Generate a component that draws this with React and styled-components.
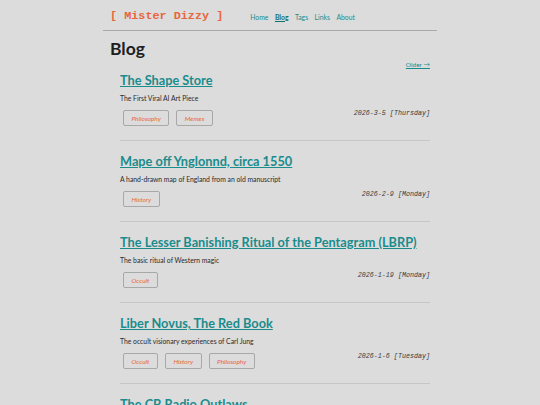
import React from "react";
import styled, { createGlobalStyle } from "styled-components";

const Global = createGlobalStyle`
  html, body { margin: 0; padding: 0; background: #dcdcdc; }
  body { font-family: Lato, "Liberation Sans", Arial, sans-serif; color: #222; }
`;

const Page = styled.div`
  width: 334px;
  margin: 0 auto;
`;

const Header = styled.header`
  display: flex;
  align-items: center;
  height: 30px;
  padding-left: 7px;
  border-bottom: 1px solid #a9a9a9;
`;

const Logo = styled.a`
  font-family: "Liberation Mono", "Courier New", monospace;
  font-weight: 700;
  font-size: 11.8px;
  color: #e8663c;
  text-decoration: none;
  white-space: pre;
  margin-top: 2px;
`;

const Nav = styled.nav`
  display: flex;
  gap: 6.5px;
  margin-left: 27px;
  margin-top: 3px;
`;

const NavLink = styled.a`
  font-size: 6.8px;
  color: ${(p) => (p.$active ? "#126f6f" : "#1a8c8c")};
  font-weight: ${(p) => (p.$active ? 700 : 400)};
  text-decoration: ${(p) => (p.$active ? "underline" : "none")};
`;

const Main = styled.main`
  padding: 0 7px;
`;

const Title = styled.h1`
  margin: 8px 0 0;
  font-size: 17.5px;
  line-height: 20px;
  font-weight: 700;
  color: #1e1e1e;
`;

const OlderRow = styled.div`
  display: flex;
  justify-content: flex-end;
  margin-top: 2px;
`;

const Older = styled.a`
  font-size: 6.5px;
  line-height: 8px;
  color: #1a8c8c;
  text-decoration: underline;
`;

const List = styled.div`
  padding-left: 10px;
`;

const Post = styled.article`
  padding-top: ${(p) => (p.$first ? "3px" : "12px")};
  padding-bottom: 14px;
  border-bottom: 1px solid #c6c6c6;
`;

const PostTitle = styled.a`
  display: block;
  font-size: 12.75px;
  line-height: 16px;
  font-weight: 700;
  color: #1a8c8c;
  text-decoration: underline;
  text-underline-offset: 1px;
  white-space: nowrap;
`;

const Sub = styled.p`
  margin: 6px 0 0;
  font-size: 6.8px;
  line-height: 8px;
  color: #2a2a2a;
`;

const Footer = styled.div`
  display: flex;
  justify-content: space-between;
  align-items: flex-start;
  margin-top: 8px;
`;

const Tags = styled.div`
  display: flex;
  gap: 7px;
  padding-left: 3px;
`;

const Tag = styled.a`
  display: flex;
  align-items: center;
  height: 14px;
  padding: 0 7.5px;
  border: 1px solid #a8a8a8;
  border-radius: 2px;
  font-size: 6.5px;
  font-style: italic;
  color: #e8663c;
  text-decoration: none;
`;

const DateText = styled.span`
  font-family: "Liberation Mono", "Courier New", monospace;
  font-style: italic;
  font-size: 6.7px;
  line-height: 8px;
  color: #3a3a3a;
  margin-top: -1px;
  white-space: pre;
`;

const posts = [
  {
    title: "The Shape Store",
    sub: "The First Viral AI Art Piece",
    tags: ["Philosophy", "Memes"],
    date: "2026-3-5 [Thursday]",
  },
  {
    title: "Mape off Ynglonnd, circa 1550",
    sub: "A hand-drawn map of England from an old manuscript",
    tags: ["History"],
    date: "2026-2-9 [Monday]",
  },
  {
    title: "The Lesser Banishing Ritual of the Pentagram (LBRP)",
    sub: "The basic ritual of Western magic",
    tags: ["Occult"],
    date: "2026-1-19 [Monday]",
  },
  {
    title: "Liber Novus, The Red Book",
    sub: "The occult visionary experiences of Carl Jung",
    tags: ["Occult", "History", "Philosophy"],
    date: "2026-1-6 [Tuesday]",
  },
  {
    title: "The CB Radio Outlaws",
    sub: "Pirates of the citizens band airwaves",
    tags: ["History"],
    date: "2025-12-28 [Sunday]",
  },
];

export default function App() {
  return (
    <Page>
      <Global />
      <Header>
        <Logo href="#">[ Mister Dizzy ]</Logo>
        <Nav>
          <NavLink href="#">Home</NavLink>
          <NavLink href="#" $active>Blog</NavLink>
          <NavLink href="#">Tags</NavLink>
          <NavLink href="#">Links</NavLink>
          <NavLink href="#">About</NavLink>
        </Nav>
      </Header>
      <Main>
        <Title>Blog</Title>
        <OlderRow>
          <Older href="#">Older →</Older>
        </OlderRow>
        <List>
          {posts.map((p, i) => (
            <Post key={p.title} $first={i === 0}>
              <PostTitle href="#">{p.title}</PostTitle>
              <Sub>{p.sub}</Sub>
              <Footer>
                <Tags>
                  {p.tags.map((t) => (
                    <Tag key={t} href="#">{t}</Tag>
                  ))}
                </Tags>
                <DateText>{p.date}</DateText>
              </Footer>
            </Post>
          ))}
        </List>
      </Main>
    </Page>
  );
}
